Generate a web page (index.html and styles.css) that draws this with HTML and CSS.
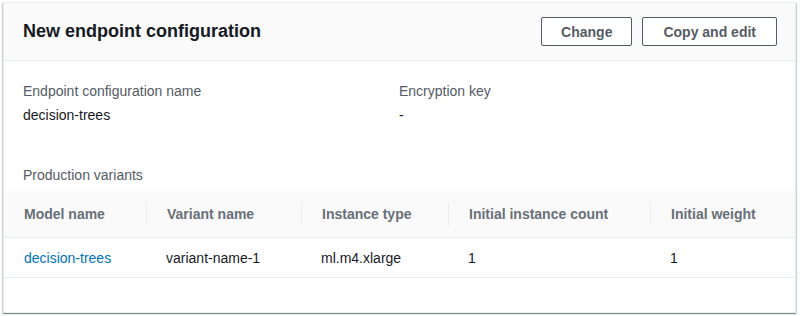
FILE: index.html
```html
<!DOCTYPE html>
<html lang="en">

<head>
    <meta charset="UTF-8">
    <title>Endpoint configuration</title>
    <link rel="stylesheet" href="styles.css">
</head>

<body>

    <div class="card">

        <!-- Header -->
        <div class="card-header">
            <h2>New endpoint configuration</h2>
            <div class="actions">
                <button class="btn">Change</button>
                <button class="btn">Copy and edit</button>
            </div>
        </div>

        <!-- Details -->
        <div class="card-body">
            <div class="details">
                <div>
                    <div class="label">Endpoint configuration name</div>
                    <div class="value">decision-trees</div>
                </div>
                <div>
                    <div class="label">Encryption key</div>
                    <div class="value">-</div>
                </div>
            </div>
            <div class="label section-label">Production variants</div>
        </div>

        <!-- Variants table -->
        <table class="variants">
            <thead>
                <tr>
                    <th class="col-model"><span>Model name</span></th>
                    <th class="col-variant"><span>Variant name</span></th>
                    <th class="col-type"><span>Instance type</span></th>
                    <th class="col-count"><span>Initial instance count</span></th>
                    <th class="col-weight"><span>Initial weight</span></th>
                </tr>
            </thead>
            <tbody>
                <tr>
                    <td><a href="#">decision-trees</a></td>
                    <td>variant-name-1</td>
                    <td>ml.m4.xlarge</td>
                    <td>1</td>
                    <td>1</td>
                </tr>
            </tbody>
        </table>

    </div>

</body>

</html>
```

FILE: styles.css
```css
body {
    font-family: "Liberation Sans", Arial, sans-serif;
    font-size: 14px;
    color: #16191f;
    background-color: #fff;
    margin: 0;
    padding: 2px 4px 3px 3px;
}

.card {
    height: 311px;
    box-sizing: border-box;
    border: 1px solid #eaeded;
    box-shadow: 0 1px 1px 0 rgba(0, 28, 36, 0.3), 1px 1px 1px 0 rgba(0, 28, 36, 0.15), -1px 1px 1px 0 rgba(0, 28, 36, 0.15);
    background-color: #fff;
}

.card-header {
    height: 57px;
    padding: 0 18px 0 19px;
    display: flex;
    align-items: center;
    justify-content: space-between;
    background-color: #fafafa;
    border-bottom: 1px solid #eaeded;
}

.card-header h2 {
    margin: 0;
    font-size: 18px;
    font-weight: bold;
    color: #16191f;
}

.actions {
    display: flex;
    gap: 10px;
}

.btn {
    height: 29px;
    padding: 0 20px;
    font-family: inherit;
    font-size: 14px;
    font-weight: bold;
    color: #545b64;
    background-color: #fff;
    border: 1px solid #545b64;
    border-radius: 2px;
    cursor: pointer;
}

.btn:first-child {
    padding: 0 19px;
}

.card-body {
    padding: 19px 20px 0 19px;
}

.details {
    display: grid;
    grid-template-columns: 1fr 1fr;
}

.label {
    line-height: 22px;
    color: #545b64;
    margin-bottom: 2px;
}

.value {
    line-height: 22px;
}

.section-label {
    margin-top: 38px;
    margin-bottom: 5px;
}

.variants {
    width: 100%;
    border-collapse: collapse;
}

.variants th {
    height: 46px;
    padding: 0;
    text-align: left;
    font-weight: bold;
    color: #687078;
    background-color: #fafafa;
    border-bottom: 1px solid #eaeded;
}

.variants th span {
    display: block;
    padding: 0 20px;
    line-height: 23px;
    border-left: 1px solid #eaeded;
}

.variants th.col-model span {
    border-left: none;
}

.variants td {
    height: 39px;
    padding: 0 20px;
    border-bottom: 1px solid #eaeded;
}

.col-model {
    width: 142px;
}

.col-variant {
    width: 155px;
}

.col-type {
    width: 147px;
}

.col-count {
    width: 202px;
}

a {
    color: #0073bb;
    text-decoration: none;
}
```
